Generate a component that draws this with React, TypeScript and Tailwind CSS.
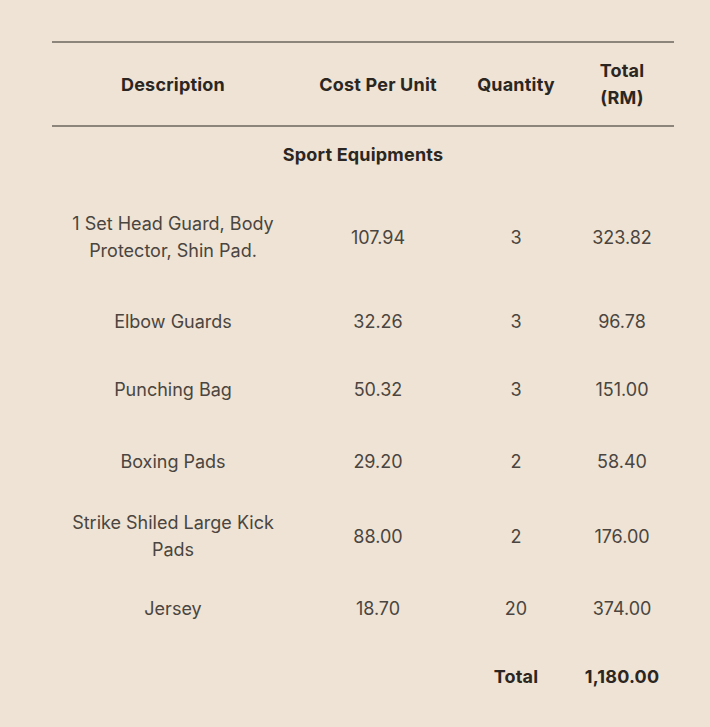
import React from 'react';

type Row = { desc: string[]; cost: string; qty: string; total: string; h: string };

const ROWS: Row[] = [
  { desc: ['1 Set Head Guard, Body', 'Protector, Shin Pad.'], cost: '107.94', qty: '3', total: '323.82', h: 'h-[112px]' },
  { desc: ['Elbow Guards'], cost: '32.26', qty: '3', total: '96.78', h: 'h-[56px]' },
  { desc: ['Punching Bag'], cost: '50.32', qty: '3', total: '151.00', h: 'h-[80px]' },
  { desc: ['Boxing Pads'], cost: '29.20', qty: '2', total: '58.40', h: 'h-[64px]' },
  { desc: ['Strike Shiled Large Kick', 'Pads'], cost: '88.00', qty: '2', total: '176.00', h: 'h-[86px]' },
  { desc: ['Jersey'], cost: '18.70', qty: '20', total: '374.00', h: 'h-[58px]' },
];

const cols = 'grid grid-cols-[242px_168px_108px_104px] w-[622px]';

const App: React.FC = () => {
  return (
    <div className="w-[710px] h-[727px] bg-[#eee3d4] pt-[41px] pl-[52px] font-['Inter',sans-serif] text-[18px] leading-[27px]">
      <div className={`${cols} h-[86px] border-y-2 border-[#8c857c] items-center text-center font-bold text-[#2b2622] tracking-[0.2px]`}>
        <div>Description</div>
        <div>Cost Per Unit</div>
        <div>Quantity</div>
        <div>
          Total
          <br />
          (RM)
        </div>
      </div>

      <div className="w-[622px] h-[54px] flex items-center justify-center font-bold text-[#2b2622] tracking-[0.2px]">
        Sport Equipments
      </div>

      {ROWS.map((r) => (
        <div key={r.desc[0]} className={`${cols} ${r.h} items-center text-center text-[#4a4540]`}>
          <div>
            {r.desc.map((line) => (
              <div key={line}>{line}</div>
            ))}
          </div>
          <div>{r.cost}</div>
          <div>{r.qty}</div>
          <div>{r.total}</div>
        </div>
      ))}

      <div className={`${cols} h-[78px] items-center text-center font-bold text-[#2b2622] tracking-[0.2px]`}>
        <div />
        <div />
        <div>Total</div>
        <div>1,180.00</div>
      </div>
    </div>
  );
};

export default App;
